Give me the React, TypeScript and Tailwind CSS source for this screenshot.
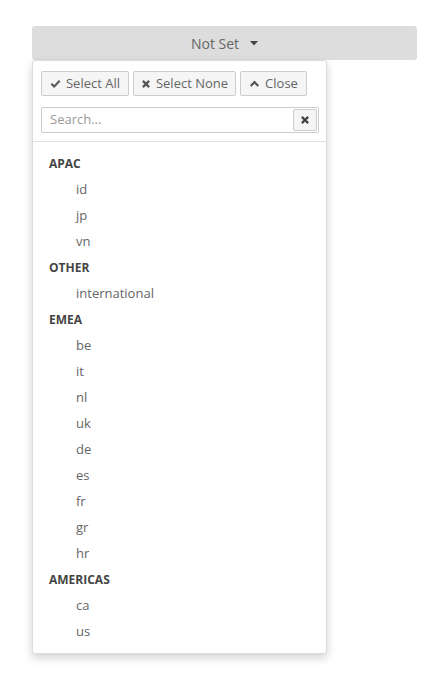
import React from "react";

const groups: { name: string; items: string[] }[] = [
  { name: "APAC", items: ["id", "jp", "vn"] },
  { name: "OTHER", items: ["international"] },
  { name: "EMEA", items: ["be", "it", "nl", "uk", "de", "es", "fr", "gr", "hr"] },
  { name: "AMERICAS", items: ["ca", "us"] },
];

const Check = () => (
  <svg width="11" height="11" viewBox="0 0 16 16" className="mr-[5px]">
    <path d="M2 8.5 L6 12.5 L14 4" fill="none" stroke="#555" strokeWidth="3" />
  </svg>
);
const Cross = ({ s = 10 }: { s?: number }) => (
  <svg width={s} height={s} viewBox="0 0 16 16" className="mr-[5px]">
    <path d="M3 3 L13 13 M13 3 L3 13" fill="none" stroke="#555" strokeWidth="3.6" />
  </svg>
);
const Up = () => (
  <svg width="11" height="11" viewBox="0 0 16 16" className="mr-[5px]">
    <path d="M2.5 11.5 L8 6 L13.5 11.5" fill="none" stroke="#555" strokeWidth="3.2" />
  </svg>
);

export default function App() {
  return (
    <div
      className="w-[441px] h-[686px] bg-white pt-[26px] pl-[32px]"
      style={{ fontFamily: '"Open Sans", sans-serif' }}
    >
      <div className="w-[385px] h-[34px] bg-[#dddddd] rounded-[3px] flex items-center justify-center text-[14px] text-[#666666]">
        <span>Not Set</span>
        <svg width="8" height="5" viewBox="0 0 8 5" className="ml-[11px] mt-[1px]">
          <path d="M0 0 L8 0 L4 4.5 Z" fill="#444" />
        </svg>
      </div>
      <div className="w-[295px] bg-white border border-[#dcdcdc] rounded-[3px] shadow-[0_4px_10px_rgba(0,0,0,0.18)]">
        <div className="px-[8px] pt-[10px] pb-[8px] border-b border-[#e0e0e0]">
          <div className="flex">
            <button className="w-[88px] h-[25px] flex items-center justify-center border border-[#cccccc] bg-[#f5f5f5] rounded-[2px] text-[13px] text-[#666] whitespace-nowrap">
              <Check />Select All
            </button>
            <button className="ml-[4px] w-[103px] h-[25px] flex items-center justify-center border border-[#cccccc] bg-[#f5f5f5] rounded-[2px] text-[13px] text-[#666] whitespace-nowrap">
              <Cross />Select None
            </button>
            <button className="ml-[4px] w-[67px] h-[25px] flex items-center justify-center border border-[#cccccc] bg-[#f5f5f5] rounded-[2px] text-[13px] text-[#666] whitespace-nowrap">
              <Up />Close
            </button>
          </div>
          <div className="mt-[11px] h-[26px] w-[278px] border border-[#cccccc] rounded-[2px] flex items-center pl-[8px] pr-[1px]">
            <span className="flex-1 text-[13px] text-[#999]">Search...</span>
            <span className="w-[24px] h-[22px] border border-[#cccccc] bg-[#f5f5f5] rounded-[2px] flex items-center justify-center">
              <svg width="10" height="10" viewBox="0 0 16 16">
                <path d="M3 3 L13 13 M13 3 L3 13" fill="none" stroke="#444" strokeWidth="3.6" />
              </svg>
            </span>
          </div>
        </div>
        <div className="pt-[9px] pb-[8px]">
          {groups.map((g) => (
            <div key={g.name}>
              <div className="h-[26px] flex items-center pl-[16px] text-[12px] font-bold text-[#444]">
                {g.name}
              </div>
              {g.items.map((it) => (
                <div key={it} className="h-[26px] flex items-center pl-[43px] text-[13px] text-[#666]">
                  {it}
                </div>
              ))}
            </div>
          ))}
        </div>
      </div>
    </div>
  );
}
